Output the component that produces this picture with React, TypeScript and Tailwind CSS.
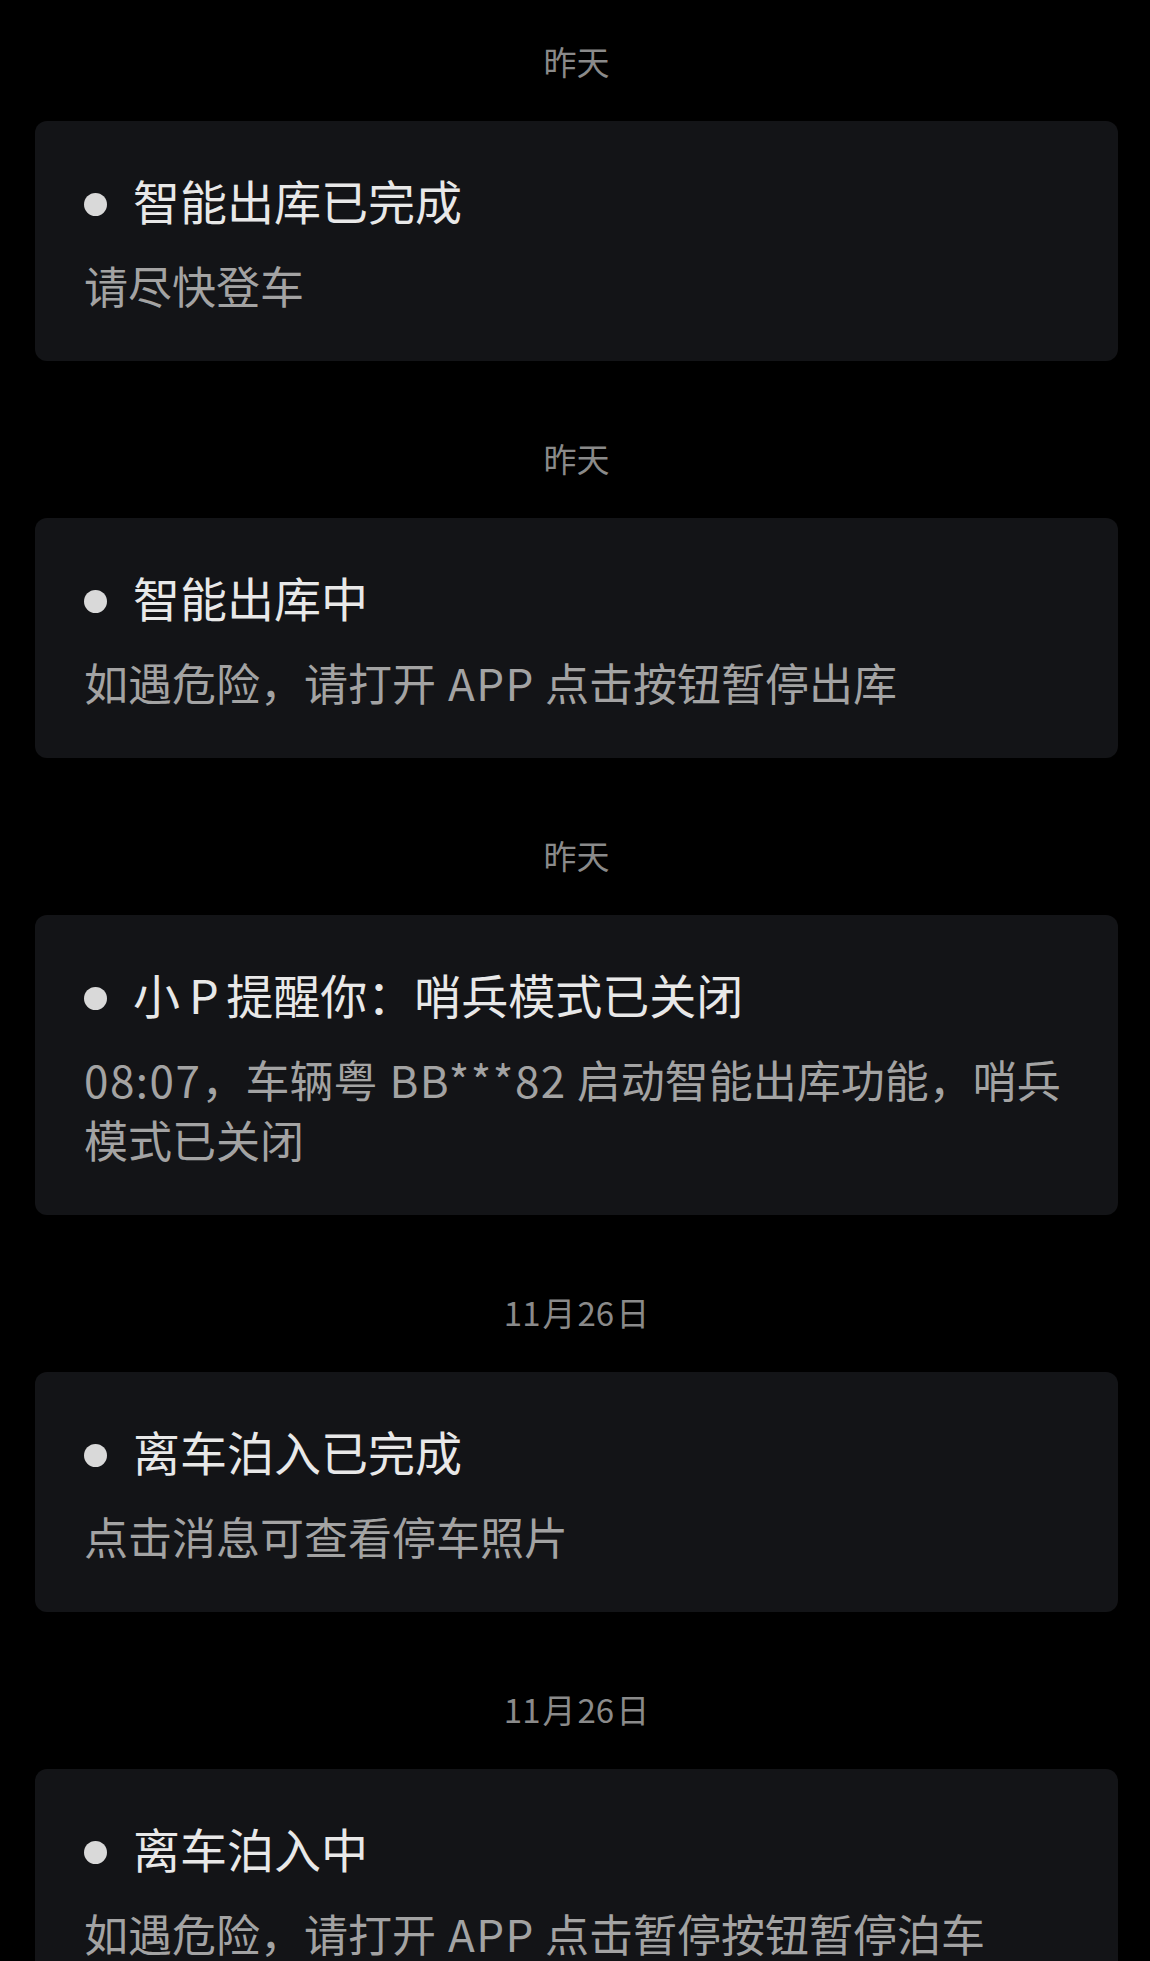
const font = { fontFamily: '"Noto Sans CJK SC", "Noto Sans", sans-serif' };

type Msg = { date: string; title: string; body: string };

const messages: Msg[] = [
  { date: '昨天', title: '智能出库已完成', body: '请尽快登车' },
  { date: '昨天', title: '智能出库中', body: '如遇危险，请打开APP点击按钮暂停出库' },
  { date: '昨天', title: '小P提醒你：哨兵模式已关闭', body: '08:07，车辆粤BB***82启动智能出库功能，哨兵模式已关闭' },
  { date: '11月26日', title: '离车泊入已完成', body: '点击消息可查看停车照片' },
  { date: '11月26日', title: '离车泊入中', body: '如遇危险，请打开APP点击暂停按钮暂停泊车' },
];

const han = /[\u4e00-\u9fff]/;

// adds a little space between Han and Latin runs, like the phone's autospace
function Spaced({ text, left, right, track }: { text: string; left: string; right: string; track: string }) {
  const parts = text.split(/([A-Za-z0-9*:]+)/).filter(Boolean);
  return (
    <>
      {parts.map((p, i) => {
        if (!/^[A-Za-z0-9*:]+$/.test(p)) return <span key={i}>{p}</span>;
        const prev = parts[i - 1];
        const next = parts[i + 1];
        const l = prev && han.test(prev[prev.length - 1]);
        const r = next && han.test(next[0]);
        return (
          <span key={i} className={`${l ? left : ''} ${r ? right : ''} ${track}`}>
            {p}
          </span>
        );
      })}
    </>
  );
}

function MessageCard({ msg }: { msg: Msg }) {
  return (
    <div>
      <div className="h-10 text-center text-[33px] leading-10 text-[#8a8a8a]">
        <Spaced text={msg.date} left="ml-[2px]" right="mr-[2px]" track="tracking-[0px]" />
      </div>
      <div className="mt-10 rounded-xl bg-[#131417] pl-[49px] pr-[46px] pt-[51px] pb-[46px]">
        <div className="flex h-14 items-center">
          <span className="mt-2 h-[23px] w-[23px] shrink-0 rounded-full bg-[#d9d9d9]" />
          <span className="ml-[26px] text-[47px] leading-[56px] text-[#e8e8e8]">
            <Spaced text={msg.title} left="ml-[9px]" right="mr-[7px]" track="tracking-[0.5px]" />
          </span>
        </div>
        <p className="mt-[27px] text-[44px] leading-[60px] text-[#a3a3a3]">
          <Spaced text={msg.body} left="ml-[12px]" right="mr-[10px]" track="tracking-[1.5px]" />
        </p>
      </div>
    </div>
  );
}

export default function App() {
  return (
    <div className="h-[1961px] w-[1150px] overflow-hidden bg-black" style={font}>
      <div className="flex flex-col gap-[77px] pl-[35px] pr-[32px] pt-[41px]">
        {messages.map((m, i) => (
          <MessageCard key={i} msg={m} />
        ))}
      </div>
    </div>
  );
}
